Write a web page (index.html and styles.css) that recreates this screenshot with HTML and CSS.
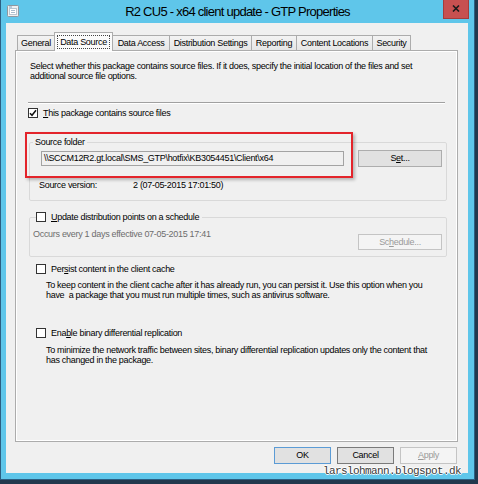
FILE: index.html
```html
<!DOCTYPE html>
<html>
<head>
<meta charset="utf-8">
<title>R2 CU5 - x64 client update - GTP Properties</title>
<link rel="stylesheet" href="styles.css">
</head>
<body>
<div class="window">
  <div class="titlebar">
    <svg class="title-icon" width="12" height="12" viewBox="0 0 12 12">
      <rect x="0.5" y="0.5" width="11" height="11" rx="1" fill="#eef0f2" stroke="#8f979e"/>
      <rect x="2.5" y="3.5" width="7" height="6" fill="#ffffff" stroke="#b9c6d1"/>
      <path d="M2 2h3" stroke="#7fa3c2"/>
      <path d="M4 5.5h4M4 7.5h4" stroke="#a8bccd"/>
    </svg>
    <div class="title">R2 CU5 - x64 client update - GTP Properties</div>
    <div class="close">
      <svg width="8" height="7" viewBox="0 0 8 7"><path d="M1 0.5L7 6.5M7 0.5L1 6.5" stroke="#1b1b1b" stroke-width="1.6"/></svg>
    </div>
  </div>
  <div class="client">
    <div class="tabs">
      <div class="tab tab-general">General</div>
      <div class="tab tab-datasource tab-active"><span class="focus">Data Source</span></div>
      <div class="tab tab-dataaccess">Data Access</div>
      <div class="tab tab-distribution">Distribution Settings</div>
      <div class="tab tab-reporting">Reporting</div>
      <div class="tab tab-content">Content Locations</div>
      <div class="tab tab-security">Security</div>
    </div>
    <div class="panel">
      <p class="intro">Select whether this package contains source files. If it does, specify the initial location of the files and set<br>additional source file options.</p>
      <div class="sep"></div>
      <div class="check check-main">
        <span class="box"><svg width="8" height="8" viewBox="0 0 8 8"><path d="M1 4.2L3 6.3L7 1.2" fill="none" stroke="#111" stroke-width="1.5"/></svg></span>
        <span><u>T</u>his package contains source files</span>
      </div>
      <fieldset class="group group-source">
        <legend class="legend-text">Source folder</legend>
        <div class="source-row">
          <div class="field">\\SCCM12R2.gt.local\SMS_GTP\hotfix\KB3054451\Client\x64</div>
          <div class="btn btn-set">S<u>e</u>t...</div>
        </div>
        <div class="version-row">
          <span class="version-label">Source version:</span>
          <span>2 (07-05-2015 17:01:50)</span>
        </div>
      </fieldset>
      <fieldset class="group group-schedule">
        <legend class="legend-check">
          <span class="box"></span>
          <span><u>U</u>pdate distribution points on a schedule</span>
        </legend>
        <div class="schedule-row">
          <span class="muted">Occurs every 1 days effective 07-05-2015 17:41</span>
          <div class="btn btn-schedule btn-disabled">Sc<u>h</u>edule...</div>
        </div>
      </fieldset>
      <div class="check check-sub check-persist">
        <span class="box"></span>
        <span>Per<u>s</u>ist content in the client cache</span>
      </div>
      <p class="desc desc-persist">To keep content in the client cache after it has already run, you can persist it. Use this option when you<br>have&nbsp; a package that you must run multiple times, such as antivirus software.</p>
      <div class="check check-sub check-enable">
        <span class="box"></span>
        <span>Ena<u>b</u>le binary differential replication</span>
      </div>
      <p class="desc desc-enable">To minimize the network traffic between sites, binary differential replication updates only the content that<br>has changed in the package.</p>
      <div class="highlight"></div>
    </div>
    <div class="buttons">
      <div class="btn btn-dialog btn-default">OK</div>
      <div class="btn btn-dialog btn-cancel">Cancel</div>
      <div class="btn btn-dialog btn-disabled"><u>A</u>pply</div>
    </div>
  </div>
  <div class="watermark">larslohmann.blogspot.dk</div>
</div>
</body>
</html>
```
FILE: styles.css
```css
html, body {
  margin: 0;
  padding: 0;
}
body {
  width: 478px;
  height: 484px;
  overflow: hidden;
  background: #22384d;
  font-family: "Liberation Sans", Arial, sans-serif;
  color: #000;
}
.window {
  position: relative;
  width: 475px;
  height: 480px;
  box-sizing: border-box;
  background: #5fc6ea;
  border-left: 1px solid #2c5f82;
  border-right: 1px solid #2c5f82;
  border-bottom: 1px solid #2c5f82;
  display: flex;
  flex-direction: column;
}
.titlebar {
  height: 23px;
  flex: none;
  display: grid;
  grid-template-columns: 1fr auto 1fr;
  align-items: start;
}
.title-icon {
  display: block;
  margin: 5px 0 0 6px;
}
.title {
  font-size: 13px;
  line-height: 23px;
  letter-spacing: -0.75px;
  white-space: nowrap;
}
.close {
  justify-self: end;
  width: 26px;
  height: 19px;
  margin-right: 5px;
  box-sizing: border-box;
  background: #c75050;
  border: 1px solid #a43c3c;
  border-top: none;
  display: flex;
  align-items: center;
  justify-content: center;
  padding-bottom: 1px;
}
.close svg {
  display: block;
}
.client {
  flex: 1;
  margin: 0 6px 6px 5px;
  background: #f0f0f0;
  display: flex;
  flex-direction: column;
  padding: 9px 10px 9px 9px;
  font-size: 9px;
  line-height: 10px;
  letter-spacing: -0.3px;
}
.tabs {
  display: flex;
  align-items: flex-end;
  height: 18px;
  flex: none;
  padding-left: 2px;
}
.tab {
  box-sizing: border-box;
  height: 15px;
  margin-left: -1px;
  border: 1px solid #acacac;
  border-bottom: none;
  background: linear-gradient(#f3f3f3, #e6e6e6);
  line-height: 14px;
  text-align: center;
  white-space: nowrap;
}
.tab:first-child {
  margin-left: 0;
}
.tab-general { width: 38px; }
.tab-datasource { width: 59px; }
.tab-dataaccess { width: 58px; }
.tab-distribution { width: 83px; }
.tab-reporting { width: 46px; }
.tab-content { width: 77px; }
.tab-security { width: 39px; }
.tab-active {
  height: 19px;
  margin-bottom: -1px;
  padding-top: 2px;
  background: #fbfbfb;
  position: relative;
  z-index: 1;
  line-height: 12px;
}
.focus {
  display: inline-block;
  padding: 0 2px;
  border: 1px dotted #444;
  line-height: 12px;
}
.panel {
  flex: 1;
  position: relative;
  border: 1px solid #acacac;
  box-shadow: inset 0 0 0 1px #ffffff;
  background: #f0f0f0;
  padding: 10px 11px 0 14px;
}
.intro {
  margin: 0;
}
.sep {
  margin: 21px 1px 0 -2px;
  border-top: 1px solid #a0a0a0;
  border-bottom: 1px solid #ffffff;
}
.check {
  display: flex;
  align-items: center;
  gap: 5px;
  height: 10px;
  white-space: nowrap;
}
.check-main {
  margin: 4px 0 0 -2px;
}
.box {
  width: 10px;
  height: 10px;
  box-sizing: border-box;
  border: 1px solid #333;
  background: #fff;
  flex: none;
  display: flex;
  align-items: center;
  justify-content: center;
}
.box svg {
  display: block;
}
.group {
  margin: 0 -1px 0 -1px;
  padding: 0;
  border: 1px solid #d9d9d9;
  border-radius: 2px;
  min-width: 0;
}
.group-source {
  margin-top: 19px;
  padding-bottom: 10px;
}
.legend-text {
  margin-left: 3px;
  padding: 0 2px;
  line-height: 10px;
}
.source-row {
  display: flex;
  align-items: center;
  height: 17px;
  margin-top: 3px;
}
.field {
  width: 303px;
  height: 15px;
  box-sizing: border-box;
  margin-left: 11px;
  border: 1px solid #a3a3a3;
  background: #f0f0f0;
  padding-left: 2px;
  line-height: 13px;
  white-space: nowrap;
  overflow: hidden;
}
.btn {
  box-sizing: border-box;
  border: 1px solid #adadad;
  background: #e1e1e1;
  text-align: center;
  white-space: nowrap;
}
.btn-set {
  width: 84px;
  height: 17px;
  margin-left: 14px;
  line-height: 15px;
}
.version-row {
  display: flex;
  margin-top: 13px;
}
.version-label {
  margin-left: 9px;
  width: 94px;
}
.group-schedule {
  margin-top: 11px;
  padding-bottom: 6px;
}
.legend-check {
  display: flex;
  align-items: center;
  gap: 5px;
  margin-left: 6px;
  padding: 0 3px 0 0;
  line-height: 10px;
  height: 10px;
  white-space: nowrap;
}
.schedule-row {
  display: flex;
  align-items: flex-start;
  margin-top: 7px;
}
.muted {
  margin-left: 3px;
  color: #6d6d6d;
}
.btn-schedule {
  width: 84px;
  height: 16px;
  margin: 5px 4px 0 auto;
  line-height: 14px;
}
.btn-disabled {
  background: #f4f4f4;
  border-color: #c4c4c4;
  color: #9a9a9a;
}
.check-sub {
  margin-left: 6px;
}
.check-persist {
  margin-top: 7px;
}
.check-enable {
  margin-top: 28px;
}
.desc {
  margin: 0 0 0 16px;
  white-space: nowrap;
}
.desc-persist {
  margin-top: 6px;
}
.desc-enable {
  margin-top: 7px;
}
.highlight {
  position: absolute;
  left: 9px;
  top: 81px;
  width: 328px;
  height: 46px;
  box-sizing: border-box;
  border: 2px solid #e3242b;
  box-shadow: 2px 2px 3px rgba(0, 0, 0, 0.25);
  pointer-events: none;
}
.buttons {
  display: flex;
  justify-content: flex-end;
  gap: 6px;
  margin-top: 5px;
  padding-right: 1px;
  flex: none;
}
.btn-dialog {
  width: 57px;
  height: 17px;
  line-height: 15px;
}
.btn-default {
  border-color: #5b9bd5;
}
.btn-cancel {
  border-color: #7a7a7a;
}
.watermark {
  position: absolute;
  right: 13px;
  top: 466px;
  font-family: "Liberation Mono", "Courier New", monospace;
  font-size: 11px;
  line-height: 11px;
  letter-spacing: -0.6px;
  color: #3a3a3a;
  text-shadow: -1px 0 #fff, 1px 0 #fff, 0 -1px #fff, 0 1px #fff;
  white-space: nowrap;
}
```
